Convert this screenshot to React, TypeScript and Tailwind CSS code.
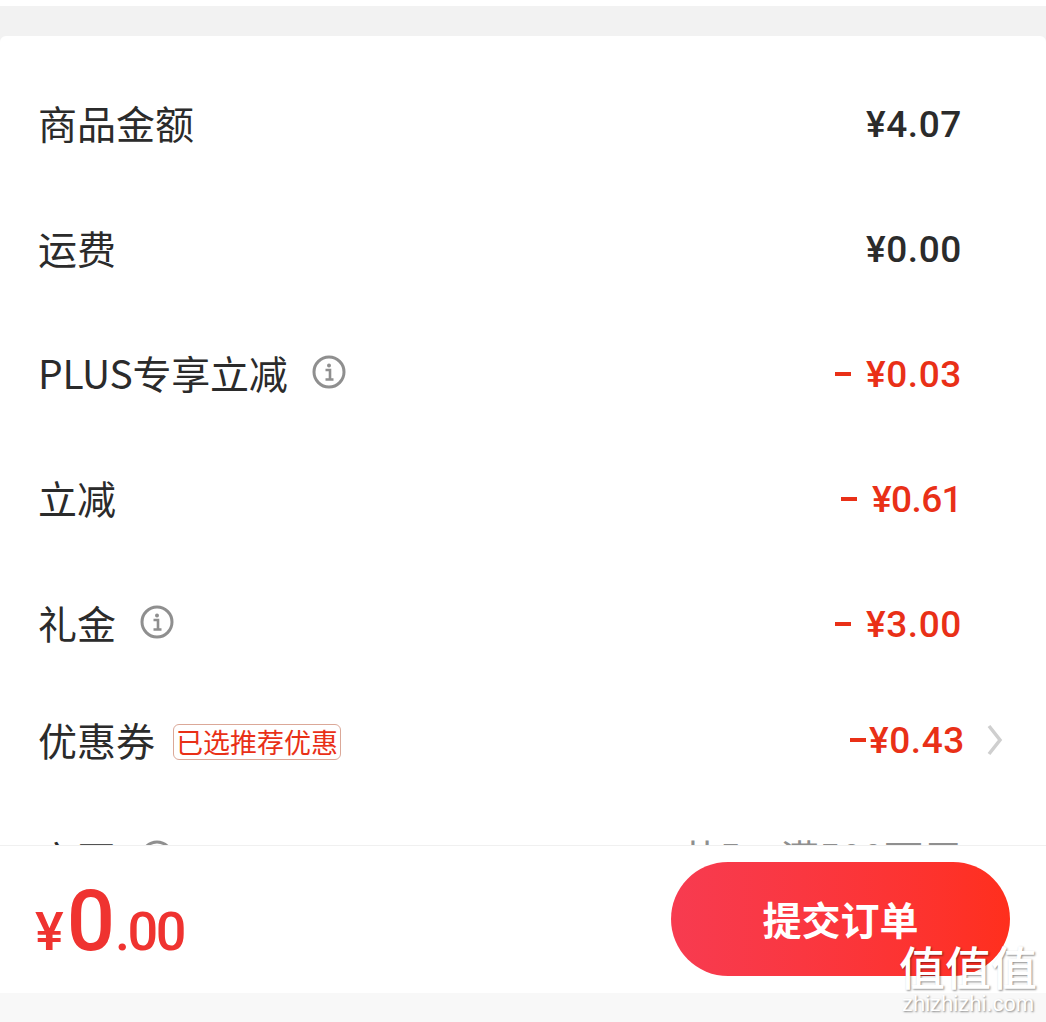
const cjk = "font-['Noto_Sans_CJK_SC','Noto_Sans',sans-serif]";
const din = "font-['Roboto',sans-serif] text-[37px] leading-none font-medium";

function InfoIcon() {
  return (
    <svg width="34" height="34" viewBox="0 0 34 34" fill="none" className="ml-6 -mt-[3px] shrink-0">
      <circle cx="17" cy="17" r="15" stroke="#8f8f8f" strokeWidth="3" />
      <circle cx="17" cy="10.5" r="2" fill="#8f8f8f" />
      <path d="M13.5 15h4.5v9M13.5 24.5h8" stroke="#8f8f8f" strokeWidth="2.6" />
    </svg>
  );
}

function Row({ label, info, value, minus, tight }: { label: string; info?: boolean; value: string; minus?: boolean; tight?: boolean }) {
  return (
    <div className="flex h-[125px] items-center justify-between pl-[38px] pr-[84px]">
      <div className="flex items-center">
        <span className={`-mt-[3px] text-[39px] leading-none text-[#2b2b2b] ${label.startsWith("PLUS") ? "tracking-[-0.25px]" : ""}`}>{label}</span>
        {info && <InfoIcon />}
      </div>
      <span className={`${din} mt-[1px] flex items-center ${tight ? "tracking-[-0.6px]" : "tracking-[0.6px]"} ${minus ? "text-[#e93017]" : "text-[#2b2b2b]"}`}>
        {minus && <span className="mr-[15px] h-[4px] w-[16px] bg-[#e93017]" />}
        {value}
      </span>
    </div>
  );
}

export default function App() {
  return (
    <div className={`relative h-[1022px] w-[1046px] overflow-hidden bg-white ${cjk}`}>
      <div className="mt-[6px] h-[36px] bg-[#f2f2f2]" />
      <div className="-mt-[6px] h-[809px] overflow-hidden rounded-t-[6px] bg-white pt-[25px]">
        <Row label="商品金额" value="¥4.07" />
        <Row label="运费" value="¥0.00" />
        <Row label="PLUS专享立减" info value="¥0.03" minus />
        <Row label="立减" value="¥0.61" minus tight />
        <Row label="礼金" info value="¥3.00" minus />
        <div className="flex h-[107px] items-center justify-between pl-[38px] pr-[43px]">
          <div className="flex items-center">
            <span className="-mt-[1px] text-[39px] leading-none text-[#2b2b2b]">优惠券</span>
            <span className="ml-[18px] flex h-[36px] w-[168px] translate-y-[2px] items-center justify-center rounded-[6px] border border-[#dba898] text-[27px] leading-none text-[#e93017]">
              已选推荐优惠
            </span>
          </div>
          <div className="flex items-center">
            <span className={`${din} mt-[1px] flex items-center tracking-[0.6px] text-[#e93017]`}>
              <span className="mr-[3px] h-[4px] w-[16px] bg-[#e93017]" />
              ¥0.43
            </span>
            <svg width="16" height="32" viewBox="0 0 16 32" fill="none" className="ml-[22px]">
              <path d="M2 2l11 14L2 30" stroke="#cfcfcf" strokeWidth="3.5" />
            </svg>
          </div>
        </div>
        <div className="flex h-[130px] items-center justify-between pl-[38px] pr-[84px]">
          <div className="flex items-center">
            <span className="text-[39px] leading-none text-[#2b2b2b]">京豆</span>
            <InfoIcon />
          </div>
          <span className="-mt-[4px] text-[39px] leading-none text-[#8f8f8f]">共5，满500可用</span>
        </div>
      </div>
      <div className="flex h-[148px] items-center justify-between border-t border-[#f0f0f0] bg-white pl-[35px] pr-[36px]">
        <div className="flex items-baseline pt-[4px] font-['Roboto',sans-serif] font-medium text-[#ef3330]">
          <span className="text-[54px] leading-none">¥</span>
          <span className="ml-[3px] text-[85px] leading-none">0</span>
          <span className="text-[54px] leading-none tracking-[-2.5px]">.00</span>
        </div>
        <button className="-mt-[2px] flex h-[114px] w-[339px] items-center justify-center rounded-full bg-gradient-to-r from-[#f73b50] to-[#ff2f1c] text-[39px] font-bold text-white">
          提交订单
        </button>
      </div>
      <div className="h-[29px] bg-[#f8f8f8]" />
      <div className="pointer-events-none absolute right-[8px] bottom-[6px] flex w-[140px] flex-col items-center text-white [text-shadow:1px_1px_2px_rgba(0,0,0,0.45)]">
        <span className="text-[46px] leading-[54px] font-medium whitespace-nowrap">值值值</span>
        <span className="font-['Liberation_Sans',sans-serif] text-[22px] leading-[24px]">zhizhizhi.com</span>
      </div>
    </div>
  );
}
